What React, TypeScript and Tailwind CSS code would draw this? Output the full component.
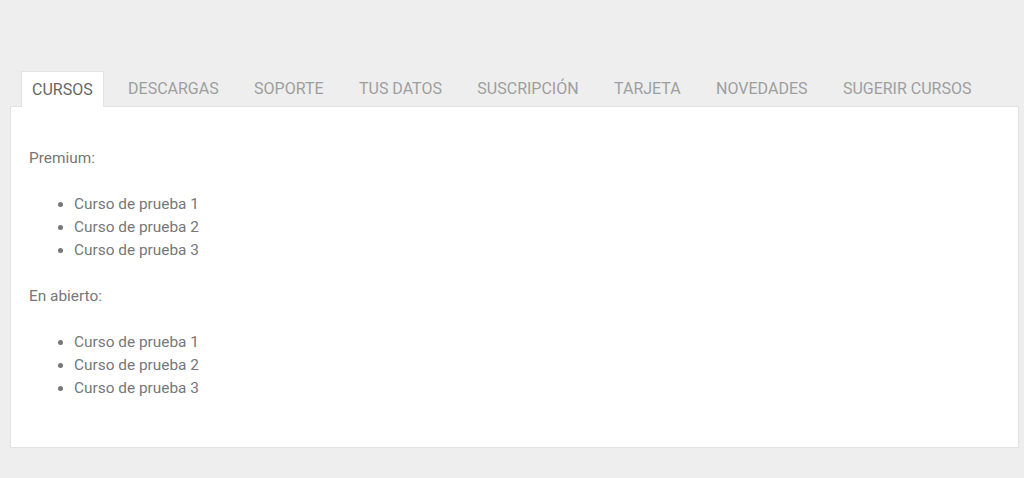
const tabs = ['CURSOS', 'DESCARGAS', 'SOPORTE', 'TUS DATOS', 'SUSCRIPCIÓN', 'TARJETA', 'NOVEDADES', 'SUGERIR CURSOS']

const cursos = ['Curso de prueba 1', 'Curso de prueba 2', 'Curso de prueba 3']

function CourseList({ title }: { title: string }) {
  return (
    <>
      <p className="my-[23px]">{title}</p>
      <ul className="my-[23px] list-disc pl-[45px]">
        {cursos.map((c) => (
          <li key={c}>{c}</li>
        ))}
      </ul>
    </>
  )
}

export default function App() {
  return (
    <div
      className="min-h-[478px] bg-[#eeeeee] pl-[10px] pr-[5px] pt-[71px]"
      style={{ fontFamily: 'Roboto, "Liberation Sans", sans-serif' }}
    >
      <div className="flex gap-[13.4px] pl-[11px]">
        {tabs.map((t, i) => (
          <div
            key={t}
            className={
              i === 0
                ? 'relative z-10 -mb-px flex h-[36px] items-center border border-b-0 border-[#e2e2e2] bg-white px-[10px] text-[16px] text-[#666666]'
                : 'flex h-[35px] items-center px-[11px] text-[16px] text-[#9e9e9e]'
            }
          >
            {t}
          </div>
        ))}
      </div>
      <div className="h-[342px] border border-[#e2e2e2] bg-white px-[18px] pt-[17px] text-[15.4px] leading-[23px] text-[#777777]">
        <CourseList title="Premium:" />
        <CourseList title="En abierto:" />
      </div>
    </div>
  )
}
